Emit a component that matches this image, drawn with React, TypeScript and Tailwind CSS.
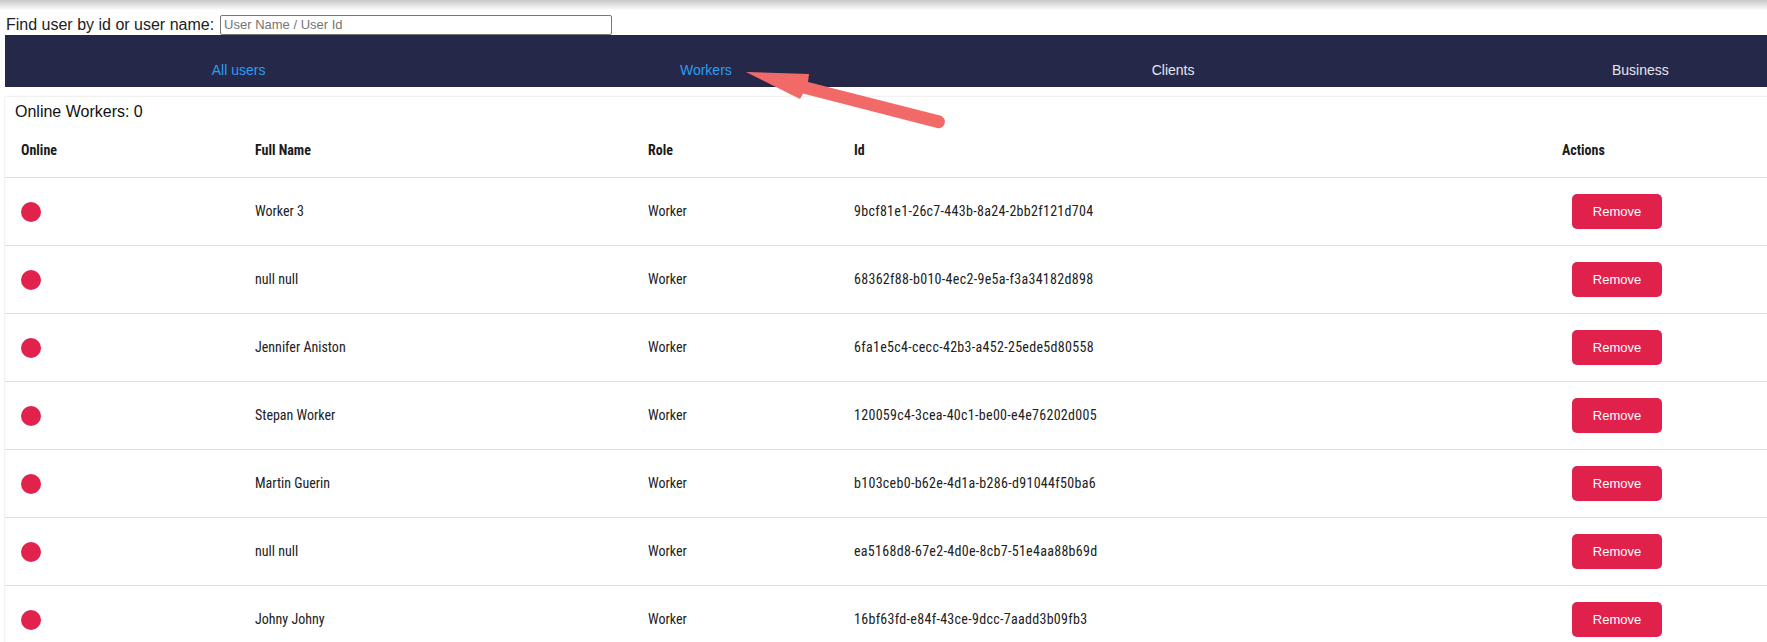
import React from 'react';

const cond = '[font-family:"Roboto_Condensed","Liberation_Sans_Narrow","DejaVu_Sans_Condensed",Roboto,sans-serif] [font-stretch:condensed]';

export default function App() {
  const tabs = [
    { label: 'All users', active: true },
    { label: 'Workers', active: true },
    { label: 'Clients', active: false },
    { label: 'Business', active: false },
  ];

  const workers = [
    { name: 'Worker 3', id: '9bcf81e1-26c7-443b-8a24-2bb2f121d704' },
    { name: 'null null', id: '68362f88-b010-4ec2-9e5a-f3a34182d898' },
    { name: 'Jennifer Aniston', id: '6fa1e5c4-cecc-42b3-a452-25ede5d80558' },
    { name: 'Stepan Worker', id: '120059c4-3cea-40c1-be00-e4e76202d005' },
    { name: 'Martin Guerin', id: 'b103ceb0-b62e-4d1a-b286-d91044f50ba6' },
    { name: 'null null', id: 'ea5168d8-67e2-4d0e-8cb7-51e4aa88b69d' },
    { name: 'Johny Johny', id: '16bf63fd-e84f-43ce-9dcc-7aadd3b09fb3' },
  ];

  return (
    <div className="relative h-[642px] w-full overflow-hidden bg-white [font-family:'Liberation_Sans',Arial,sans-serif]">
      {/* top shadow */}
      <div className="h-[14px] bg-gradient-to-b from-[#c8c8c8] via-white via-75% to-white" />

      {/* Search */}
      <div className="flex h-[21px] items-center pl-[6px]">
        <label className="text-[16px] leading-[18px] text-[#222]">Find user by id or user name:</label>
        <input
          className="ml-[6px] h-[20px] w-[392px] rounded-[2px] border border-[#767676] px-[3px] text-[13px] text-[#222] outline-none placeholder:text-[#757575]"
          placeholder="User Name / User Id"
        />
      </div>

      {/* Tabs */}
      <div className="ml-[5px] flex h-[52px] w-[1869px] items-end bg-[#26284a] pb-[9px]">
        {tabs.map((t) => (
          <div
            key={t.label}
            className={`flex-1 text-center text-[14px] leading-[16px] ${t.active ? 'text-[#2a9df4]' : 'text-[#e6e6ee]'}`}
          >
            {t.label}
          </div>
        ))}
      </div>

      {/* Card */}
      <div className="ml-[5px] mt-[10px] w-[1900px] bg-white pt-[5px] shadow-[0_0_2px_rgba(0,0,0,0.18)]">
        <div className="h-[20px] pl-[10px] text-[16px] leading-[20px] text-[#111]">Online Workers: 0</div>

        <div className={`grid h-[56px] grid-cols-[234px_393px_206px_708px_1fr] items-center border-b border-[#e0e0e0] pt-[2px] text-[14px] font-bold text-[#1a1a1a] ${cond}`}>
          <div className="px-4">Online</div>
          <div className="px-4">Full Name</div>
          <div className="px-4">Role</div>
          <div className="px-4">Id</div>
          <div className="px-4">Actions</div>
        </div>

        {workers.map((w, i) => (
          <div
            key={i}
            className={`grid h-[68px] grid-cols-[234px_393px_206px_708px_1fr] items-center border-b border-[#e0e0e0] text-[14px] text-[#212121] ${cond}`}
          >
            <div className="px-4">
              <div className="h-[20px] w-[20px] rounded-full bg-[#e0224c]" />
            </div>
            <div className="px-4">{w.name}</div>
            <div className="px-4">Worker</div>
            <div className="px-4 tracking-[0.3px]">{w.id}</div>
            <div className="px-4">
              <button className="ml-[10px] h-[35px] w-[90px] rounded-[5px] bg-[#e0214b] text-[13px] text-white [font-family:'Liberation_Sans',Arial,sans-serif]">
                Remove
              </button>
            </div>
          </div>
        ))}
      </div>

      {/* annotation arrow */}
      <svg className="pointer-events-none absolute left-0 top-0" width="1767" height="642">
        <path
          d="M746 72 L809 74 L808 82 L940 115.5 A6.4 6.4 0 0 1 937 128 L803 93.5 L800 99 Z"
          fill="#f26a68"
        />
      </svg>
    </div>
  );
}
